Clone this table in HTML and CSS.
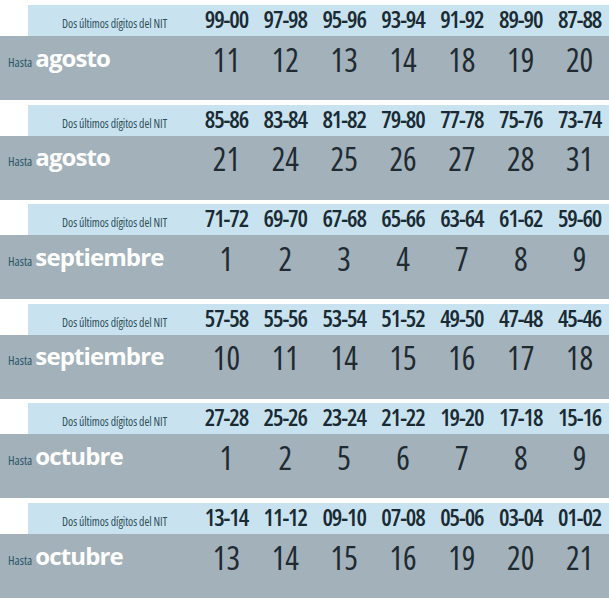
FILE: index.html
```html
<!DOCTYPE html>
<html lang="es">
<head>
<meta charset="utf-8">
<title>Calendario NIT</title>
<link rel="stylesheet" href="styles.css">
</head>
<body>
<div class="table">
  <section class="block">
    <div class="head"><span class="label">Dos últimos dígitos del NIT</span><span>99-00</span><span>97-98</span><span>95-96</span><span>93-94</span><span>91-92</span><span>89-90</span><span>87-88</span></div>
    <div class="row"><span class="month-cell"><span class="hasta">Hasta</span> <span class="month">agosto</span></span><span>11</span><span>12</span><span>13</span><span>14</span><span>18</span><span>19</span><span>20</span></div>
  </section>
  <section class="block">
    <div class="head"><span class="label">Dos últimos dígitos del NIT</span><span>85-86</span><span>83-84</span><span>81-82</span><span>79-80</span><span>77-78</span><span>75-76</span><span>73-74</span></div>
    <div class="row"><span class="month-cell"><span class="hasta">Hasta</span> <span class="month">agosto</span></span><span>21</span><span>24</span><span>25</span><span>26</span><span>27</span><span>28</span><span>31</span></div>
  </section>
  <section class="block">
    <div class="head"><span class="label">Dos últimos dígitos del NIT</span><span>71-72</span><span>69-70</span><span>67-68</span><span>65-66</span><span>63-64</span><span>61-62</span><span>59-60</span></div>
    <div class="row"><span class="month-cell"><span class="hasta">Hasta</span> <span class="month">septiembre</span></span><span>1</span><span>2</span><span>3</span><span>4</span><span>7</span><span>8</span><span>9</span></div>
  </section>
  <section class="block">
    <div class="head"><span class="label">Dos últimos dígitos del NIT</span><span>57-58</span><span>55-56</span><span>53-54</span><span>51-52</span><span>49-50</span><span>47-48</span><span>45-46</span></div>
    <div class="row"><span class="month-cell"><span class="hasta">Hasta</span> <span class="month">septiembre</span></span><span>10</span><span>11</span><span>14</span><span>15</span><span>16</span><span>17</span><span>18</span></div>
  </section>
  <section class="block">
    <div class="head"><span class="label">Dos últimos dígitos del NIT</span><span>27-28</span><span>25-26</span><span>23-24</span><span>21-22</span><span>19-20</span><span>17-18</span><span>15-16</span></div>
    <div class="row"><span class="month-cell"><span class="hasta">Hasta</span> <span class="month">octubre</span></span><span>1</span><span>2</span><span>5</span><span>6</span><span>7</span><span>8</span><span>9</span></div>
  </section>
  <section class="block">
    <div class="head"><span class="label">Dos últimos dígitos del NIT</span><span>13-14</span><span>11-12</span><span>09-10</span><span>07-08</span><span>05-06</span><span>03-04</span><span>01-02</span></div>
    <div class="row"><span class="month-cell"><span class="hasta">Hasta</span> <span class="month">octubre</span></span><span>13</span><span>14</span><span>15</span><span>16</span><span>19</span><span>20</span><span>21</span></div>
  </section>
</div>
</body>
</html>
```
FILE: styles.css
```css
html, body {
  margin: 0;
  padding: 0;
  background: #ffffff;
}

.table {
  width: 609px;
  padding-top: 5px;
  font-family: "Open Sans", "Liberation Sans", sans-serif;
}

.block {
  margin-bottom: 4.6px;
}

.head {
  margin-left: 28px;
  height: 31px;
  box-sizing: border-box;
  padding-top: 2px;
  background: #c8e3ef;
  display: grid;
  grid-template-columns: 169px repeat(7, 1fr);
  align-items: baseline;
  font-stretch: 75%;
  font-weight: 600;
  font-size: 23.5px;
  line-height: 24px;
  letter-spacing: -1.1px;
  color: #1a2a33;
  text-align: center;
}

.head .label {
  text-align: right;
  padding-right: 30px;
  font-size: 11.8px;
  font-weight: 400;
  letter-spacing: -0.1px;
  color: #2f4d59;
}

.row {
  height: 64px;
  background: #a2b1ba;
  display: grid;
  grid-template-columns: 197px repeat(7, 1fr);
  align-items: start;
  text-align: center;
  font-stretch: 75%;
  font-weight: 450;
  font-size: 32px;
  line-height: 32px;
  color: #1f2a31;
}

.row > span {
  padding-top: 7.6px;
}

.month-cell {
  text-align: left;
  padding-left: 8px;
  font-stretch: 100%;
  font-size: 12px;
  line-height: 24px;
}

.row > .month-cell {
  padding-top: 9.6px;
}

.hasta {
  font-size: 12.5px;
  font-weight: 400;
  color: #2b5566;
  font-stretch: 75%;
}

.month {
  font-size: 24px;
  font-weight: 700;
  color: #ffffff;
  letter-spacing: -0.9px;
}
```
